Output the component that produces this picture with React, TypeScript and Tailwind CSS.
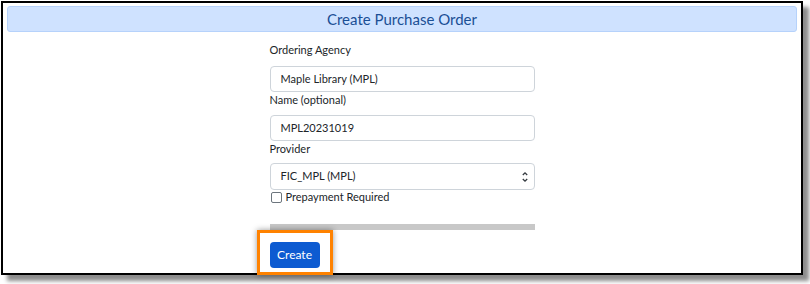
import React from "react";

const font = { fontFamily: 'Lato, "Noto Sans", sans-serif' };

const SelectArrows = () => (
    <svg width="8" height="12" viewBox="0 0 8 12" className="absolute right-[5px] top-[7px]">
        <path d="M1.8 4 L4 1.8 L6.2 4" fill="none" stroke="#343a40" strokeWidth="1.3" />
        <path d="M1.8 8 L4 10.2 L6.2 8" fill="none" stroke="#343a40" strokeWidth="1.3" />
    </svg>
);

const CreatePurchaseOrder = () => {
    return (
        <div className="bg-white w-[810px] h-[284px] pt-[1px] pl-[1px]" style={font}>
            <div className="relative w-[802px] h-[274px] border-2 border-black bg-white shadow-[6px_6px_4px_rgba(0,0,0,0.45)]">
                <div className="mx-[4px] mt-[3px] h-[26px] flex items-center justify-center rounded-[3px] border border-[#b6d2fb] bg-[#cfe2ff] text-[15px] text-[#1b4f95]">
                    Create Purchase Order
                </div>
                <div className="mx-auto w-[265px] mt-[10px] flex flex-col text-[11px] text-[#212529]">
                    <label className="leading-[16px] mb-[8px]">Ordering Agency</label>
                    <div className="h-[26px] flex items-center px-[10px] border border-[#ced4da] rounded-[4px]">
                        Maple Library (MPL)
                    </div>
                    <label className="leading-[16px] mb-[7px]">Name (optional)</label>
                    <div className="h-[26px] flex items-center px-[10px] border border-[#ced4da] rounded-[4px]">
                        MPL20231019
                    </div>
                    <label className="leading-[16px] mb-[6px]">Provider</label>
                    <div className="relative h-[27px] flex items-center px-[10px] border border-[#ced4da] rounded-[4px]">
                        FIC_MPL (MPL)
                        <SelectArrows />
                    </div>
                    <div className="flex items-center gap-[4px] pl-[1px]">
                        <span className="w-[11px] h-[11px] border border-[#6c757d] rounded-[2px] bg-white" />
                        <span className="leading-[14px]">Prepayment Required</span>
                    </div>
                    <div className="mt-[20px] h-[6px] bg-[#c8c8c8]" />
                    <div className="relative mt-[12px]">
                        <div className="absolute left-[-13px] top-[-12px] w-[76px] h-[45px] border-[3px] border-[#ff8200] shadow-[0_0_6px_rgba(0,0,0,0.4)] z-10" />
                        <button className="w-[50px] h-[26px] rounded-[4px] bg-[#0d5bd1] text-white text-[12px]">
                            Create
                        </button>
                    </div>
                </div>
            </div>
        </div>
    );
};

export default function App() {
    return <CreatePurchaseOrder />;
}
